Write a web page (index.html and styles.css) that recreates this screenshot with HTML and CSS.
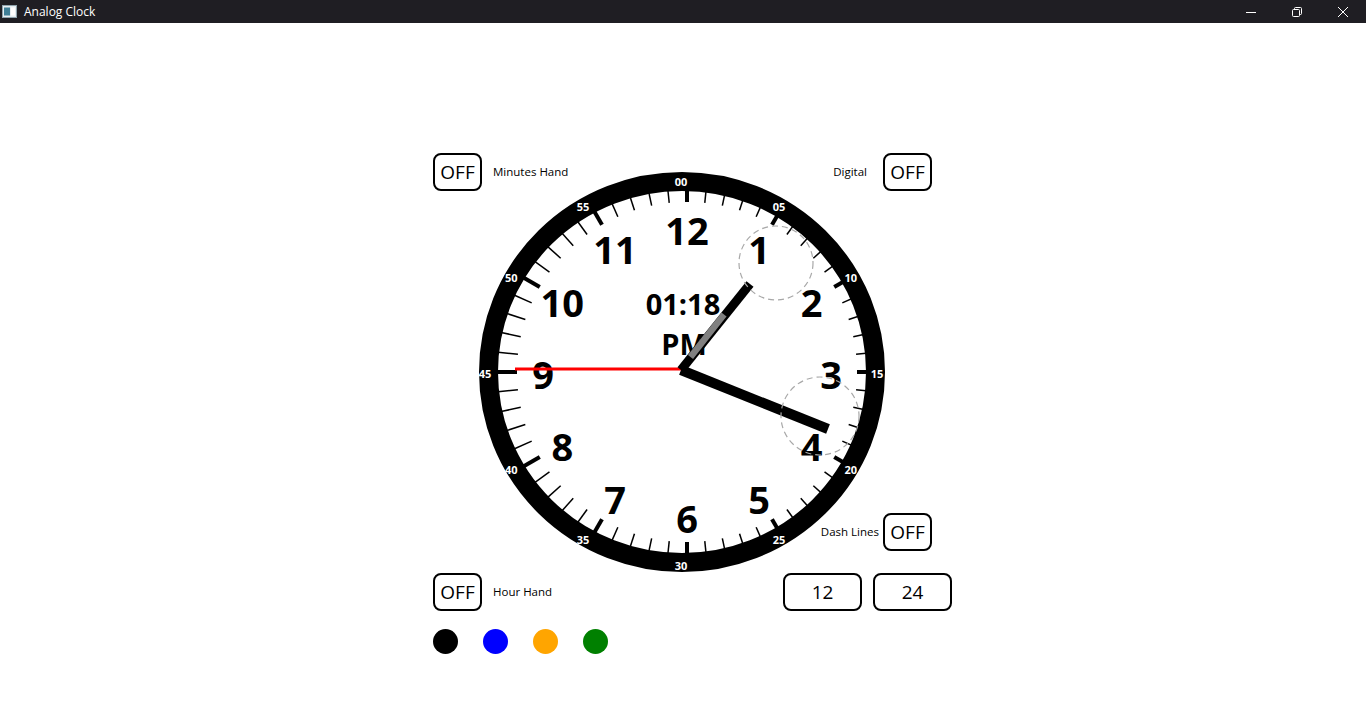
FILE: index.html
```html
<!DOCTYPE html>
<html lang="en">
<head>
<meta charset="utf-8">
<title>Analog Clock</title>
<link rel="stylesheet" href="styles.css">
</head>
<body>
<header class="titlebar">
  <div class="title-left">
    <svg class="app-icon" width="15" height="13" viewBox="0 0 15 13">
      <rect x="0.5" y="0.5" width="14" height="12" fill="#e6eef2" stroke="#8fa3ad"/>
      <rect x="2" y="2.5" width="6" height="8" fill="#3f7f97"/>
      <rect x="9" y="2.5" width="4" height="8" fill="#ffffff"/>
    </svg>
    <span class="app-title">Analog Clock</span>
  </div>
  <div class="win-controls">
    <div class="win-btn"><svg width="10" height="10" viewBox="0 0 10 10"><line x1="0" y1="5.5" x2="10" y2="5.5" stroke="#fff" stroke-width="1"/></svg></div>
    <div class="win-btn"><svg width="10" height="10" viewBox="0 0 10 10"><rect x="0.5" y="2.5" width="7" height="7" rx="1" fill="none" stroke="#fff"/><path d="M2.5 2.5 V1.5 a1 1 0 0 1 1 -1 H8.5 a1 1 0 0 1 1 1 V6.5 a1 1 0 0 1 -1 1 H7.5" fill="none" stroke="#fff"/></svg></div>
    <div class="win-btn"><svg width="10" height="10" viewBox="0 0 10 10"><path d="M0 0 L10 10 M10 0 L0 10" stroke="#fff" stroke-width="1"/></svg></div>
  </div>
</header>

<main class="main">
  <div class="panel">
    <div class="stage">
      <div class="row-top">
        <div class="group gap-left">
          <button class="btn">OFF</button>
          <span class="label">Minutes Hand</span>
        </div>
        <div class="group gap-right">
          <span class="label">Digital</span>
          <button class="btn">OFF</button>
        </div>
      </div>

      <svg class="clock" width="420" height="411" viewBox="0 0 420 411">
        <defs>
          <line id="mi" x1="215" y1="20" x2="215" y2="40" stroke="#000" stroke-width="1.5"/>
          <line id="ma" x1="215" y1="20" x2="215" y2="40" stroke="#000" stroke-width="4"/>
        </defs>
        <g class="ticks">
          <use href="#ma" transform="rotate(0 215 210)"/>
          <use href="#mi" transform="rotate(6 215 210)"/>
          <use href="#mi" transform="rotate(12 215 210)"/>
          <use href="#mi" transform="rotate(18 215 210)"/>
          <use href="#mi" transform="rotate(24 215 210)"/>
          <use href="#ma" transform="rotate(30 215 210)"/>
          <use href="#mi" transform="rotate(36 215 210)"/>
          <use href="#mi" transform="rotate(42 215 210)"/>
          <use href="#mi" transform="rotate(48 215 210)"/>
          <use href="#mi" transform="rotate(54 215 210)"/>
          <use href="#ma" transform="rotate(60 215 210)"/>
          <use href="#mi" transform="rotate(66 215 210)"/>
          <use href="#mi" transform="rotate(72 215 210)"/>
          <use href="#mi" transform="rotate(78 215 210)"/>
          <use href="#mi" transform="rotate(84 215 210)"/>
          <use href="#ma" transform="rotate(90 215 210)"/>
          <use href="#mi" transform="rotate(96 215 210)"/>
          <use href="#mi" transform="rotate(102 215 210)"/>
          <use href="#mi" transform="rotate(108 215 210)"/>
          <use href="#mi" transform="rotate(114 215 210)"/>
          <use href="#ma" transform="rotate(120 215 210)"/>
          <use href="#mi" transform="rotate(126 215 210)"/>
          <use href="#mi" transform="rotate(132 215 210)"/>
          <use href="#mi" transform="rotate(138 215 210)"/>
          <use href="#mi" transform="rotate(144 215 210)"/>
          <use href="#ma" transform="rotate(150 215 210)"/>
          <use href="#mi" transform="rotate(156 215 210)"/>
          <use href="#mi" transform="rotate(162 215 210)"/>
          <use href="#mi" transform="rotate(168 215 210)"/>
          <use href="#mi" transform="rotate(174 215 210)"/>
          <use href="#ma" transform="rotate(180 215 210)"/>
          <use href="#mi" transform="rotate(186 215 210)"/>
          <use href="#mi" transform="rotate(192 215 210)"/>
          <use href="#mi" transform="rotate(198 215 210)"/>
          <use href="#mi" transform="rotate(204 215 210)"/>
          <use href="#ma" transform="rotate(210 215 210)"/>
          <use href="#mi" transform="rotate(216 215 210)"/>
          <use href="#mi" transform="rotate(222 215 210)"/>
          <use href="#mi" transform="rotate(228 215 210)"/>
          <use href="#mi" transform="rotate(234 215 210)"/>
          <use href="#ma" transform="rotate(240 215 210)"/>
          <use href="#mi" transform="rotate(246 215 210)"/>
          <use href="#mi" transform="rotate(252 215 210)"/>
          <use href="#mi" transform="rotate(258 215 210)"/>
          <use href="#mi" transform="rotate(264 215 210)"/>
          <use href="#ma" transform="rotate(270 215 210)"/>
          <use href="#mi" transform="rotate(276 215 210)"/>
          <use href="#mi" transform="rotate(282 215 210)"/>
          <use href="#mi" transform="rotate(288 215 210)"/>
          <use href="#mi" transform="rotate(294 215 210)"/>
          <use href="#ma" transform="rotate(300 215 210)"/>
          <use href="#mi" transform="rotate(306 215 210)"/>
          <use href="#mi" transform="rotate(312 215 210)"/>
          <use href="#mi" transform="rotate(318 215 210)"/>
          <use href="#mi" transform="rotate(324 215 210)"/>
          <use href="#ma" transform="rotate(330 215 210)"/>
          <use href="#mi" transform="rotate(336 215 210)"/>
          <use href="#mi" transform="rotate(342 215 210)"/>
          <use href="#mi" transform="rotate(348 215 210)"/>
          <use href="#mi" transform="rotate(354 215 210)"/>
        </g>
        <ellipse cx="210" cy="210" rx="193.5" ry="190.5" fill="none" stroke="#000" stroke-width="19"/>
        <g class="min-labels">
          <text x="209" y="19">00</text>
          <text x="307" y="44.7">05</text>
          <text x="378.7" y="115">10</text>
          <text x="405" y="211">15</text>
          <text x="378.7" y="307">20</text>
          <text x="307" y="377.3">25</text>
          <text x="209" y="403">30</text>
          <text x="111" y="377.3">35</text>
          <text x="39.3" y="307">40</text>
          <text x="13" y="211">45</text>
          <text x="39.3" y="115">50</text>
          <text x="111" y="44.7">55</text>
        </g>
        <g class="hour-nums">
          <text x="215" y="68">12</text>
          <text x="287" y="87.3">1</text>
          <text x="339.7" y="140">2</text>
          <text x="359" y="212">3</text>
          <text x="339.7" y="284">4</text>
          <text x="287" y="336.7">5</text>
          <text x="215" y="356">6</text>
          <text x="143" y="336.7">7</text>
          <text x="90.3" y="284">8</text>
          <text x="71" y="212">9</text>
          <text x="90.3" y="140">10</text>
          <text x="143" y="87.3">11</text>
        </g>
        <g class="digital">
          <text x="211" y="141">01:18</text>
          <text x="212" y="181">PM</text>
        </g>
        <line x1="43" y1="207" x2="209" y2="207" stroke="#ff0000" stroke-width="3"/>
        <line x1="209" y1="208" x2="356" y2="267" stroke="#000" stroke-width="10"/>
        <line x1="209" y1="208" x2="278" y2="122" stroke="#000" stroke-width="9"/>
        <line x1="218.5" y1="195" x2="252" y2="152.5" stroke="#808080" stroke-width="6.5"/>
        <circle cx="304" cy="101" r="37" fill="none" stroke="#a8a8a8" stroke-width="1.2" stroke-dasharray="6 4"/>
        <circle cx="348" cy="254" r="39" fill="none" stroke="#a8a8a8" stroke-width="1.2" stroke-dasharray="6 4"/>
      </svg>

      <div class="row-dash">
        <span class="label">Dash Lines</span>
        <button class="btn">OFF</button>
      </div>
    </div>

    <div class="row-bottom">
      <div class="group gap-left">
        <button class="btn">OFF</button>
        <span class="label">Hour Hand</span>
      </div>
      <div class="group gap-fmt">
        <button class="btn btn-wide">12</button>
        <button class="btn btn-wide">24</button>
      </div>
    </div>

    <div class="dots">
      <span class="dot dot-black"></span>
      <span class="dot dot-blue"></span>
      <span class="dot dot-orange"></span>
      <span class="dot dot-green"></span>
    </div>
  </div>
</main>
</body>
</html>
```

FILE: styles.css
```css
html, body {
  margin: 0;
  padding: 0;
  background: #ffffff;
  font-family: "Open Sans", "Noto Sans", sans-serif;
  color: #000;
}

.titlebar {
  height: 23px;
  background: #1f1e23;
  display: flex;
  align-items: center;
  justify-content: space-between;
}

.title-left {
  display: flex;
  align-items: center;
  padding-left: 2px;
}

.app-icon {
  display: block;
}

.app-title {
  color: #ffffff;
  font-size: 12px;
  margin-left: 7px;
  line-height: 23px;
}

.win-controls {
  display: flex;
  height: 23px;
}

.win-btn {
  width: 46px;
  height: 23px;
  display: flex;
  align-items: center;
  justify-content: center;
}

.main {
  padding: 130px 0 0 433px;
}

.panel {
  width: 519px;
}

.stage {
  display: grid;
  width: 499px;
  height: 420px;
  grid-template-rows: 420px;
}

.stage > * {
  grid-area: 1 / 1;
}

.row-top {
  align-self: start;
  display: flex;
  justify-content: space-between;
  align-items: center;
  height: 38px;
}

.group {
  display: flex;
  align-items: center;
}

.gap-left { gap: 11px; }
.gap-right { gap: 16px; }
.gap-fmt { gap: 11px; }

.label {
  font-size: 11.5px;
  line-height: 16px;
  color: #000;
}

.btn {
  box-sizing: border-box;
  width: 49px;
  height: 38px;
  border: 2px solid #000;
  border-radius: 8px;
  background: #fff;
  padding: 0;
  margin: 0;
  font-family: "Open Sans", "Noto Sans", sans-serif;
  font-size: 19px;
  color: #000;
  display: flex;
  align-items: center;
  justify-content: center;
}

.btn-wide {
  width: 79px;
}

.clock {
  display: block;
  margin: 9px 0 0 39px;
  align-self: start;
  justify-self: start;
}

.min-labels text {
  fill: #ffffff;
  font-family: "Open Sans", sans-serif;
  font-weight: 700;
  font-size: 11px;
  text-anchor: middle;
  dominant-baseline: central;
}

.hour-nums text {
  fill: #000;
  font-family: "Open Sans", sans-serif;
  font-weight: 700;
  font-size: 38px;
  text-anchor: middle;
  dominant-baseline: central;
}

.digital text {
  fill: #000;
  font-family: "Open Sans", sans-serif;
  font-weight: 700;
  font-size: 29px;
  text-anchor: middle;
  dominant-baseline: central;
}

.row-dash {
  align-self: start;
  justify-self: end;
  margin-top: 360px;
  display: flex;
  align-items: center;
  gap: 4px;
  height: 38px;
}

.row-bottom {
  display: flex;
  justify-content: space-between;
  align-items: center;
  height: 38px;
}

.dots {
  display: flex;
  gap: 25px;
  margin-top: 18px;
}

.dot {
  width: 25px;
  height: 25px;
  border-radius: 50%;
  display: block;
}

.dot-black { background: #000000; }
.dot-blue { background: #0000ff; }
.dot-orange { background: #ffa500; }
.dot-green { background: #008000; }
```
